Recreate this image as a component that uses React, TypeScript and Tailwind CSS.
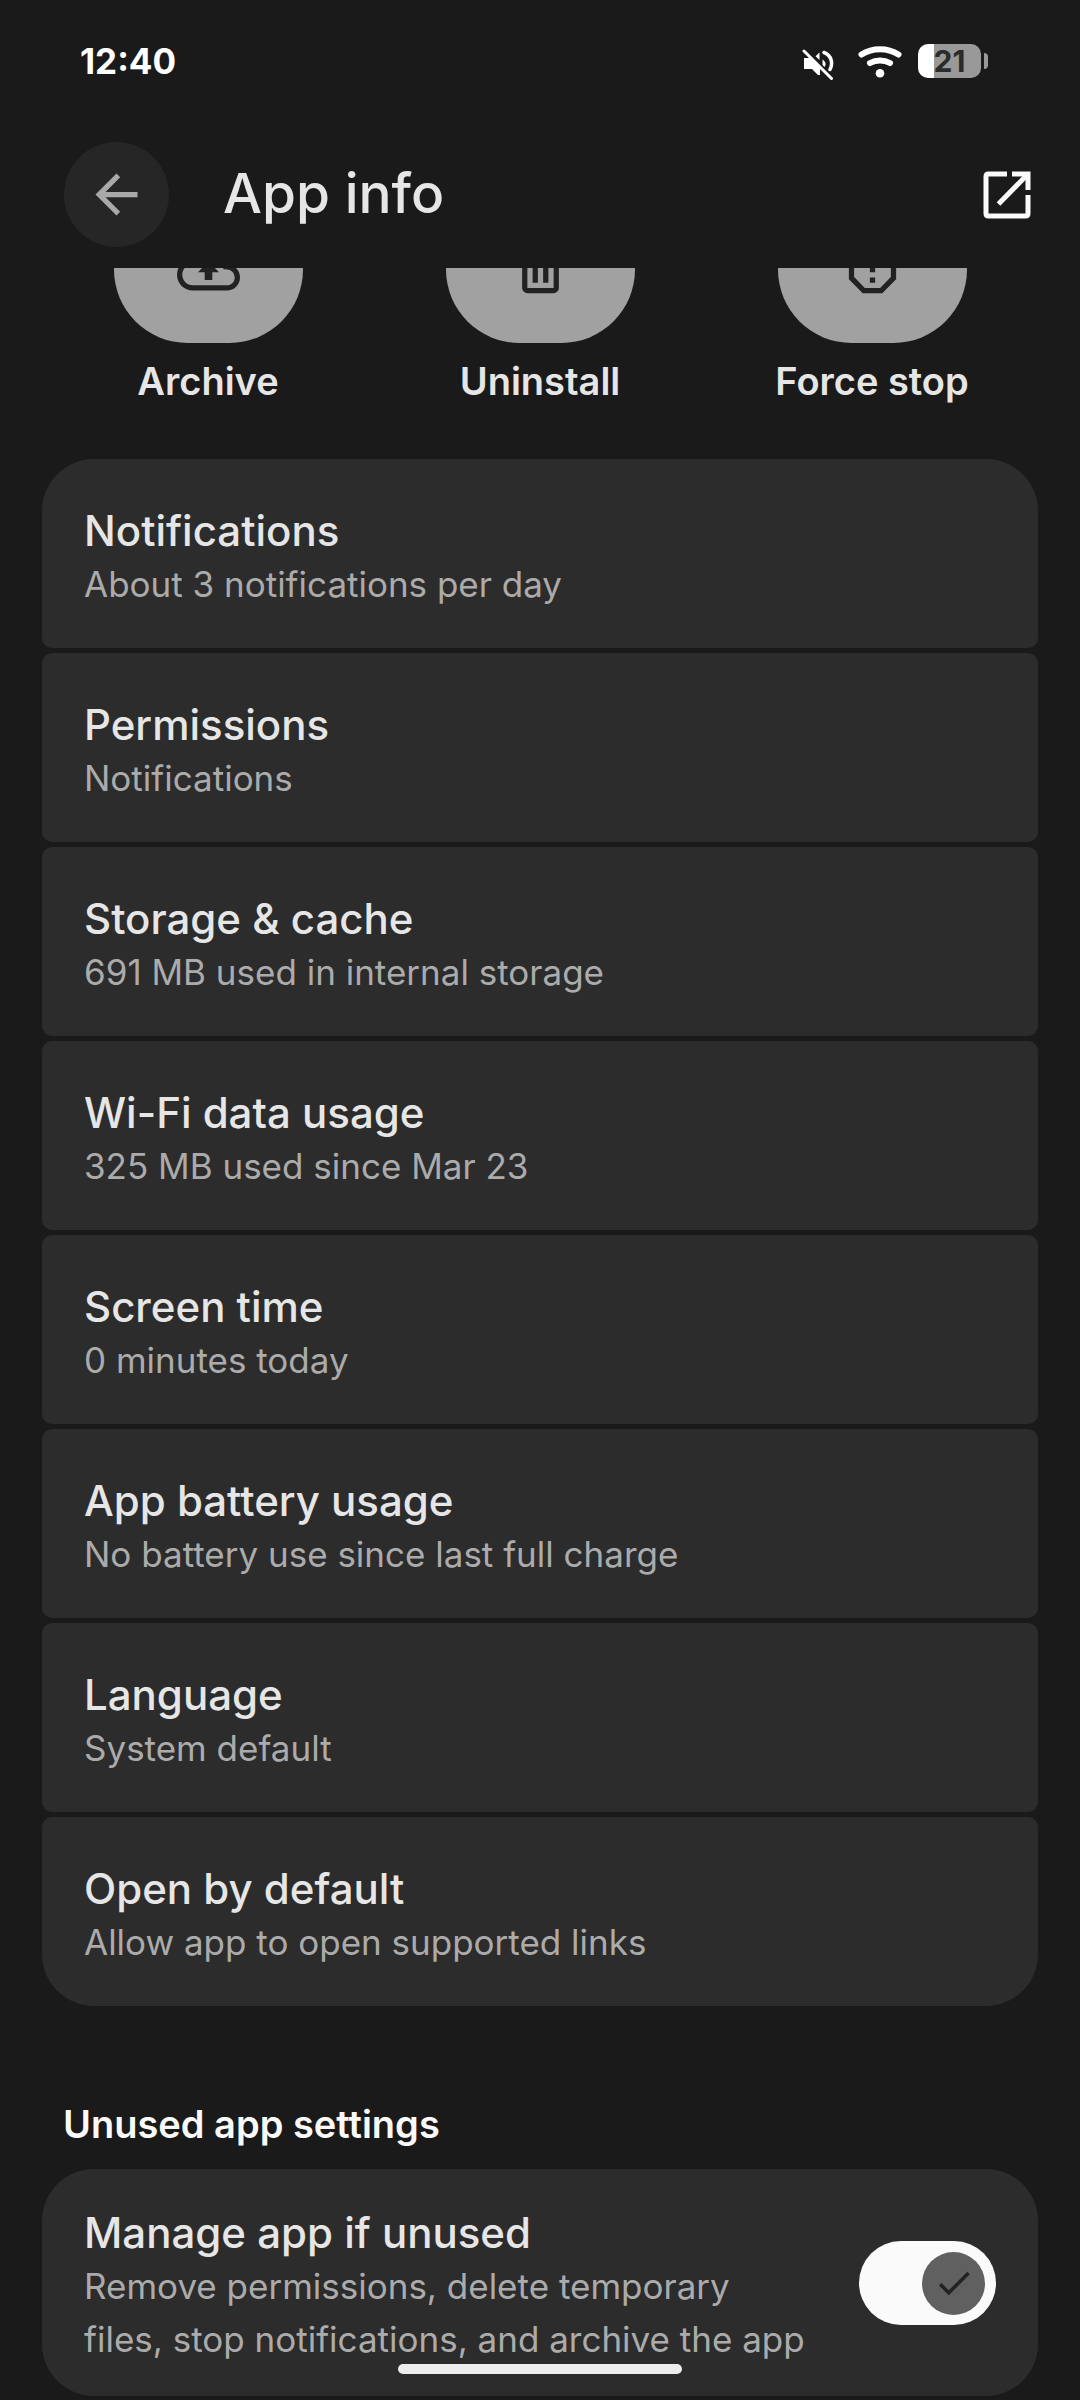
import {useState} from 'react';

import cx from 'clsx';
import {type IconType} from 'react-icons';
import {MdArrowBack, MdCheck, MdOutlineBackup, MdReportGmailerrorred} from 'react-icons/md';

interface IconProps {
  className?: string;
}

interface SettingsItem {
  title: string;
  summary: string;
}

interface AppAction {
  label: string;
  Icon: IconType | ((props: IconProps) => React.JSX.Element);
}

const MutedIcon = ({className}: IconProps): React.JSX.Element => (
  <svg viewBox="0 0 32 32" fill="none" className={className} aria-hidden="true">
    <path d="M2 9h7l9 9v8h-2l-6-6H2Z" fill="currentColor" />
    <path d="M17.500 3.500v7.500l-4-3.800Z" fill="currentColor" />
    <path d="M20.500 10.500c3 2 4 5 2 7.500l-2-2Z" fill="currentColor" />
    <path
      d="M22 3.500C30 6.500 31 15 28 20.500"
      stroke="currentColor"
      strokeWidth="3.500"
      strokeLinecap="round"
    />
    <path d="M2 2 29.500 29.500" stroke="currentColor" strokeWidth="3" strokeLinecap="round" />
  </svg>
);

const WifiIcon = ({className}: IconProps): React.JSX.Element => (
  <svg viewBox="0 0 44 34" fill="none" className={className} aria-hidden="true">
    <g stroke="currentColor" strokeWidth="6" strokeLinecap="round">
      <path d="M3.500 10.500c11-7 26-7 37 0" />
      <path d="M12 19c6-3.500 14-3.500 20 0" />
    </g>
    <circle cx="22" cy="29.300" r="4.300" fill="currentColor" />
  </svg>
);

const OpenInNewIcon = ({className}: IconProps): React.JSX.Element => (
  <svg viewBox="0 0 48 48" fill="none" className={className} aria-hidden="true">
    <g stroke="currentColor" strokeWidth="5">
      <path d="M24 3H5.500Q3 3 3 5.500v37Q3 45 5.500 45h37q2.500 0 2.500-2.500V24" />
      <path d="M29 3h16v16" />
      <path d="M45 3 15.500 33" />
    </g>
  </svg>
);

const TrashIcon = ({className}: IconProps): React.JSX.Element => (
  <svg viewBox="0 0 24 24" fill="currentColor" className={className} aria-hidden="true">
    <path d="M7 21q-.8 0-1.400-.6T5 19V6H4V4h5V3h6v1h5v2h-1v13q0 .8-.6 1.400T17 21ZM17 6H7v13h10ZM9 17h2V8H9Zm4 0h2V8h-2Z" />
  </svg>
);

const actions: AppAction[] = [
  {label: 'Archive', Icon: MdOutlineBackup},
  {label: 'Uninstall', Icon: TrashIcon},
  {label: 'Force stop', Icon: MdReportGmailerrorred},
];

const items: SettingsItem[] = [
  {title: 'Notifications', summary: 'About 3 notifications per day'},
  {title: 'Permissions', summary: 'Notifications'},
  {title: 'Storage & cache', summary: '691 MB used in internal storage'},
  {title: 'Wi-Fi data usage', summary: '325 MB used since Mar 23'},
  {title: 'Screen time', summary: '0 minutes today'},
  {title: 'App battery usage', summary: 'No battery use since last full charge'},
  {title: 'Language', summary: 'System default'},
  {title: 'Open by default', summary: 'Allow app to open supported links'},
];

const StatusBar = (): React.JSX.Element => (
  <div className="flex h-[121px] items-center justify-between pr-[92px] pl-20 text-white">
    <time className="text-[35px] leading-[42px] font-bold">12:40</time>
    <div className="flex items-center">
      <MutedIcon className="mt-2 mr-6 size-8" />
      <WifiIcon className="mr-4 h-[34px] w-11" />
      <div
        className="flex h-[34px] w-[63px] items-center justify-center overflow-hidden rounded-[10px] bg-linear-to-r from-white from-25% to-[#999999] to-25% text-[30px] leading-[34px] font-bold text-[#2b2b2b]"
        aria-label="Battery 21 percent"
      >
        21
      </div>
      <div className="ml-[3px] h-4 w-1 rounded-r-sm bg-[#999999]" />
    </div>
  </div>
);

const Header = (): React.JSX.Element => (
  <header className="flex h-[147px] items-center pr-[49px] pl-16">
    <button
      type="button"
      aria-label="Navigate up"
      className="flex size-[105px] items-center justify-center rounded-full bg-[#262626] text-[#a9a9a9]"
    >
      <MdArrowBack className="size-[63px]" />
    </button>
    <h1 className="ml-[54px] flex-1 pb-1 text-[55px] leading-[72px] font-medium text-[#e6e6e6]">
      App info
    </h1>
    <button type="button" aria-label="Open app" className="text-[#fafafa]">
      <OpenInNewIcon className="size-12" />
    </button>
  </header>
);

const ActionButton = ({label, Icon}: AppAction): React.JSX.Element => (
  <button type="button" className="-mt-[72px] flex flex-col items-center gap-3">
    <span className="flex h-[147px] w-[189px] items-center justify-center rounded-full bg-[#a1a1a1] text-[#222222]">
      <Icon className="size-[63px]" />
    </span>
    <span className="text-[38px] leading-[53px] font-semibold text-[#e6e6e6]">{label}</span>
  </button>
);

const ItemText = ({title, summary}: SettingsItem): React.JSX.Element => (
  <>
    <span className="block text-[42px] leading-[55px] font-medium text-[#e6e6e6]">{title}</span>
    <span className="block text-[35px] leading-[53px] text-[#ababab]">{summary}</span>
  </>
);

const App = (): React.JSX.Element => {
  const [manageUnused, setManageUnused] = useState(true);

  return (
    <div className="min-h-screen bg-[#1a1a1a] pb-1 font-['Inter',sans-serif]">
      <StatusBar />
      <Header />

      <main className="overflow-hidden px-[42px]">
        <div className="grid grid-cols-3">
          {actions.map(action => (
            <ActionButton key={action.label} {...action} />
          ))}
        </div>

        <ul className="mt-[51px] flex flex-col gap-[5px]">
          {items.map((item, i) => (
            <li key={item.title}>
              <button
                type="button"
                className={cx(
                  'min-h-[189px] w-full bg-[#2c2c2c] px-[42px] pt-9 pb-[30px] text-left',
                  i === 0 ? 'rounded-t-[52px]' : 'rounded-t-[10px]',
                  i === items.length - 1 ? 'rounded-b-[52px]' : 'rounded-b-[10px]'
                )}
              >
                <ItemText {...item} />
              </button>
            </li>
          ))}
        </ul>

        <h2 className="mt-[92px] mb-[18px] px-[21px] text-[38px] leading-[53px] font-semibold text-[#fafafa]">
          Unused app settings
        </h2>

        <label className="flex items-center gap-[53px] rounded-[52px] bg-[#2c2c2c] px-[42px]">
          <span className="flex-1 pt-9 pb-[30px]">
            <ItemText
              title="Manage app if unused"
              summary="Remove permissions, delete temporary files, stop notifications, and archive the app"
            />
          </span>
          <span className="relative flex h-[84px] w-[137px] shrink-0">
            <input
              type="checkbox"
              role="switch"
              checked={manageUnused}
              onChange={e => setManageUnused(e.target.checked)}
              className="size-full appearance-none rounded-full bg-[#606060] checked:bg-[#fafafa]"
            />
            <span
              className={cx(
                'pointer-events-none absolute top-[11px] flex size-[63px] items-center justify-center rounded-full',
                manageUnused ? 'right-[11px] bg-[#606060]' : 'left-[11px] bg-[#a1a1a1]'
              )}
            >
              {manageUnused && <MdCheck className="size-[42px] text-[#222222]" />}
            </span>
          </span>
        </label>
      </main>

      {/* Gesture navigation handle, floats over the scrolled content */}
      <div className="fixed bottom-[26px] left-1/2 h-[10px] w-[284px] -translate-x-1/2 rounded-full bg-[#ededed]" />
    </div>
  );
};

export default App;
